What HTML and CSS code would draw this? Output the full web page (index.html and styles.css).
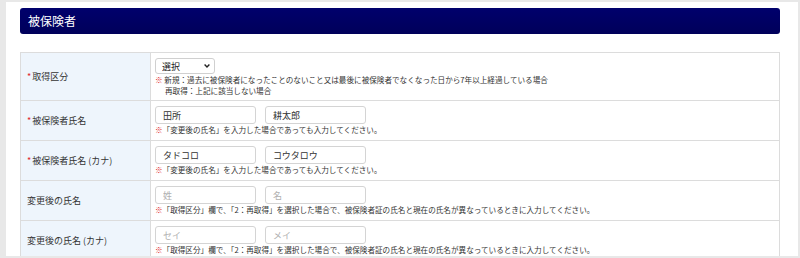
FILE: index.html
```html
<!DOCTYPE html>
<html lang="ja">
<head>
    <meta charset="UTF-8">
    <meta name="viewport" content="width=device-width, initial-scale=1.0">
    <title>被保険者</title>
    <link rel="stylesheet" href="styles.css">
</head>
<body>
    <div class="page">
        <h2 class="heading">被保険者</h2>

        <table class="form-table">
            <tr class="row-first">
                <th><span class="req">*</span>取得区分</th>
                <td>
                    <div class="select-wrap">
                        <select class="select">
                            <option>選択</option>
                            <option>1：新規</option>
                            <option>2：再取得</option>
                        </select>
                        <svg class="chevron" width="6" height="4" viewBox="0 0 6 4"><path d="M0.6 0.6 L3 3 L5.4 0.6" fill="none" stroke="#222" stroke-width="1.4"/></svg>
                    </div>
                    <p class="note"><span class="mark">※</span> 新規：過去に被保険者になったことのないこと又は最後に被保険者でなくなった日から7年以上経過している場合<br><span class="indent">再取得：上記に該当しない場合</span></p>
                </td>
            </tr>
            <tr>
                <th><span class="req">*</span>被保険者氏名</th>
                <td>
                    <div class="name-fields">
                        <input type="text" class="field" value="田所">
                        <input type="text" class="field" value="耕太郎">
                    </div>
                    <p class="note"><span class="mark">※</span>「変更後の氏名」を入力した場合であっても入力してください。</p>
                </td>
            </tr>
            <tr>
                <th><span class="req">*</span>被保険者氏名 (カナ)</th>
                <td>
                    <div class="name-fields">
                        <input type="text" class="field" value="タドコロ">
                        <input type="text" class="field" value="コウタロウ">
                    </div>
                    <p class="note"><span class="mark">※</span>「変更後の氏名」を入力した場合であっても入力してください。</p>
                </td>
            </tr>
            <tr>
                <th>変更後の氏名</th>
                <td>
                    <div class="name-fields">
                        <input type="text" class="field" placeholder="姓">
                        <input type="text" class="field" placeholder="名">
                    </div>
                    <p class="note"><span class="mark">※</span>「取得区分」欄で、「2：再取得」を選択した場合で、被保険者証の氏名と現在の氏名が異なっているときに入力してください。</p>
                </td>
            </tr>
            <tr>
                <th>変更後の氏名 (カナ)</th>
                <td>
                    <div class="name-fields">
                        <input type="text" class="field" placeholder="セイ">
                        <input type="text" class="field" placeholder="メイ">
                    </div>
                    <p class="note"><span class="mark">※</span>「取得区分」欄で、「2：再取得」を選択した場合で、被保険者証の氏名と現在の氏名が異なっているときに入力してください。</p>
                </td>
            </tr>
        </table>
    </div>
</body>
</html>
```

FILE: styles.css
```css
body {
    margin: 0;
    background-color: #e8e8e8;
    font-family: "Noto Sans CJK JP", "Noto Sans", sans-serif;
    color: #333;
}

.page {
    background-color: #fff;
    margin: 2px 2px 0 6px;
    padding: 6px 18px 0 14px;
    height: 254px;
    box-sizing: border-box;
    overflow: hidden;
}

.heading {
    margin: 0 0 18px;
    height: 26px;
    line-height: 26px;
    padding-left: 8px;
    background: linear-gradient(#00006c, #00005a);
    border-radius: 3px;
    color: #fff;
    font-size: 12px;
    font-weight: normal;
}

.form-table {
    width: 100%;
    border-collapse: collapse;
}

.form-table th,
.form-table td {
    border: 1px solid #dcdcdc;
}

.form-table th {
    width: 123px;
    padding: 0 0 0 6px;
    background-color: #eef5fc;
    text-align: left;
    font-size: 9px;
    font-weight: normal;
}

.form-table td {
    padding: 5px 5px 5px 4px;
}

.row-first td {
    padding-bottom: 4px;
}

.req {
    color: #e0262a;
    margin-right: 1px;
}

.select-wrap {
    position: relative;
    width: 60px;
    height: 16px;
}

.select {
    display: block;
    appearance: none;
    width: 60px;
    height: 16px;
    padding: 0 0 0 6px;
    border: 1px solid #d0d0d0;
    border-radius: 3px;
    background-color: #fff;
    font-family: inherit;
    font-size: 9px;
    color: #222;
}

.chevron {
    position: absolute;
    right: 5px;
    top: 6px;
    pointer-events: none;
}

.name-fields {
    display: flex;
    gap: 9px;
}

.field {
    width: 101px;
    height: 18px;
    box-sizing: border-box;
    padding: 0 7px;
    border: 1px solid #d4d4d4;
    border-radius: 3px;
    font-family: inherit;
    font-size: 9px;
    color: #333;
}

.field::placeholder {
    color: #b0b0b0;
}

.note {
    margin: 0;
    font-size: 7.6px;
    line-height: 11px;
    white-space: nowrap;
}

.mark {
    color: #e0262a;
}

.indent {
    padding-left: 10px;
}
```
